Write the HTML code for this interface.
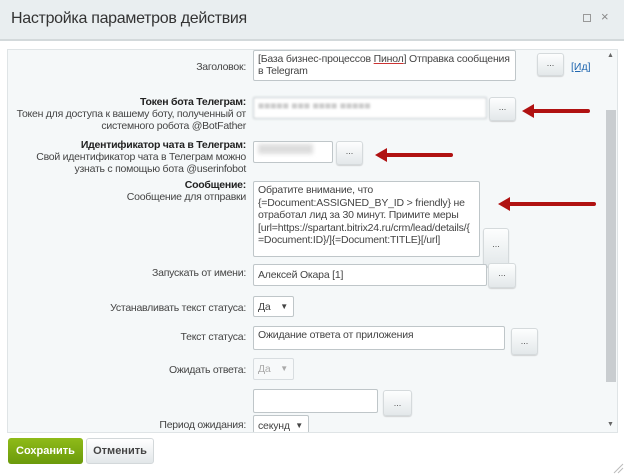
<!DOCTYPE html>
<html><head><meta charset="utf-8"><style>
*{box-sizing:border-box;margin:0;padding:0}
body{width:624px;height:474px;background:#fff;font-family:"Liberation Sans",sans-serif;font-size:10.5px;color:#333;position:relative;overflow:hidden}
.hdr{position:absolute;left:0;top:0;width:624px;height:41px;background:#e9eef0;border-bottom:2px solid #d3d9db}
.hdr .t{position:absolute;left:11px;top:10px;font-size:16px;color:#333;letter-spacing:-0.3px}
.a{position:absolute}
.lbl{position:absolute;right:378px;text-align:right;font-size:10.5px;color:#444;line-height:12px;white-space:nowrap;letter-spacing:-0.25px}
.lbl b{color:#222}
.in{position:absolute;background:#fff;border:1px solid #bfc6c9;border-radius:2px;font-size:10.5px;color:#444;padding:2px 4px;line-height:12px;overflow:hidden;letter-spacing:-0.2px}
.btn{position:absolute;background:linear-gradient(#fdfefe,#e3e8ea);border:1px solid #d5dadc;border-radius:3px;font-size:9px;color:#555;text-align:center;line-height:18px;box-shadow:0 1px 1px rgba(0,0,0,.15)}
.sel:after{content:"▼";position:absolute;right:5px;top:4px;font-size:8px}
.arrow{position:absolute;height:4px;background:#b01212;border-radius:2px}
.arrow:before{content:"";position:absolute;left:-8px;top:-5px;border-right:12px solid #b01212;border-top:7px solid transparent;border-bottom:7px solid transparent}
</style></head><body>
<div class="a" style="left:7px;top:49px;width:611px;height:384px;background:#f5f8f9;border:1px solid #dfe4e6"></div>
<div class="hdr"><div class="t">Настройка параметров действия</div>
<div class="a" style="left:583px;top:14px;width:8px;height:8px;border:1px solid #999"></div>
<div class="a" style="left:601px;top:9px;font-size:13px;color:#888">×</div></div>

<div class="lbl" style="top:61px">Заголовок:</div>
<div class="in" style="left:253px;top:50px;width:263px;height:31px">[База бизнес-процессов <u style="text-decoration-color:#c33">Пинол</u>] Отправка сообщения в Telegram</div>
<div class="btn" style="left:537px;top:53px;width:27px;height:23px">...</div>
<div class="a" style="left:571px;top:61px;color:#2067b0;text-decoration:underline">[Ид]</div>

<div class="lbl" style="top:96px"><b>Токен бота Телеграм:</b><br>Токен для доступа к вашему боту, полученный от<br>системного робота @BotFather</div>
<div class="in" style="left:253px;top:97px;width:234px;height:22px;color:#ccc;filter:blur(1px)">■■■■■ ■■■ ■■■■ ■■■■■</div>
<div class="btn" style="left:489px;top:97px;width:27px;height:24px">...</div>
<div class="arrow" style="left:530px;top:109px;width:60px"></div>

<div class="lbl" style="top:139px"><b>Идентификатор чата в Телеграм:</b><br>Свой идентификатор чата в Телеграм можно<br>узнать с помощью бота @userinfobot</div>
<div class="in" style="left:253px;top:141px;width:80px;height:22px"><div style="width:55px;height:10px;background:#ddd;filter:blur(2px)"></div></div>
<div class="btn" style="left:336px;top:141px;width:27px;height:24px">...</div>
<div class="arrow" style="left:383px;top:153px;width:70px"></div>

<div class="lbl" style="top:179px"><b>Сообщение:</b><br>Сообщение для отправки</div>
<div class="in" style="left:253px;top:181px;width:227px;height:76px;line-height:12.5px;overflow-wrap:anywhere">Обратите внимание, что {=Document:ASSIGNED_BY_ID &gt; friendly} не отработал лид за 30 минут. Примите меры [url=https://spartant.bitrix24.ru/crm/lead/details/{=Document:ID}/]{=Document:TITLE}[/url]</div>
<div class="btn" style="left:483px;top:228px;width:26px;height:39px;line-height:30px">...</div>
<div class="arrow" style="left:506px;top:202px;width:90px"></div>

<div class="lbl" style="top:267px">Запускать от имени:</div>
<div class="in" style="left:253px;top:264px;width:234px;height:22px;padding-top:4px">Алексей Окара [1]</div>
<div class="btn" style="left:488px;top:263px;width:28px;height:25px">...</div>

<div class="lbl" style="top:302px">Устанавливать текст статуса:</div>
<div class="in sel" style="left:253px;top:296px;width:41px;height:21px;padding-top:4px">Да</div>

<div class="lbl" style="top:331px">Текст статуса:</div>
<div class="in" style="left:253px;top:326px;width:252px;height:24px">Ожидание ответа от приложения</div>
<div class="btn" style="left:511px;top:328px;width:27px;height:27px;line-height:24px">...</div>

<div class="lbl" style="top:364px">Ожидать ответа:</div>
<div class="in sel" style="left:253px;top:358px;width:41px;height:22px;padding-top:4px;color:#aaa;background:#f7f9fa;border-color:#d8dde0">Да</div>

<div class="in" style="left:253px;top:389px;width:125px;height:24px"></div>
<div class="btn" style="left:383px;top:390px;width:29px;height:26px;line-height:24px">...</div>

<div class="lbl" style="top:419px">Период ожидания:</div>
<div class="in sel" style="left:253px;top:415px;width:56px;height:18px;border-bottom:none;padding-top:4px">секунд</div>
<div class="a" style="left:8px;top:432px;width:610px;height:1px;background:#dfe4e6"></div>
<div class="a" style="left:0;top:433px;width:624px;height:41px;background:#fff"></div>

<div class="a" style="left:606px;top:110px;width:10px;height:272px;background:#c9cdd0"></div>
<div class="a" style="left:607px;top:52px;font-size:7px;color:#666">▲</div>
<div class="a" style="left:607px;top:421px;font-size:7px;color:#666">▼</div>

<div class="a" style="left:8px;top:438px;width:75px;height:26px;background:linear-gradient(#8fbb19,#6b9a0b);border-radius:3px;color:#fff;font-weight:bold;font-size:11px;text-align:center;line-height:26px">Сохранить</div>
<div class="a" style="left:86px;top:438px;width:68px;height:26px;background:linear-gradient(#fff,#e2e7e9);border:1px solid #d3d8da;border-radius:3px;color:#444;font-weight:bold;font-size:11px;text-align:center;line-height:24px">Отменить</div>
<svg class="a" style="left:612px;top:462px" width="12" height="12"><path d="M2 11L11 2M6 11L11 6" stroke="#bbb"/></svg>
</body></html>
